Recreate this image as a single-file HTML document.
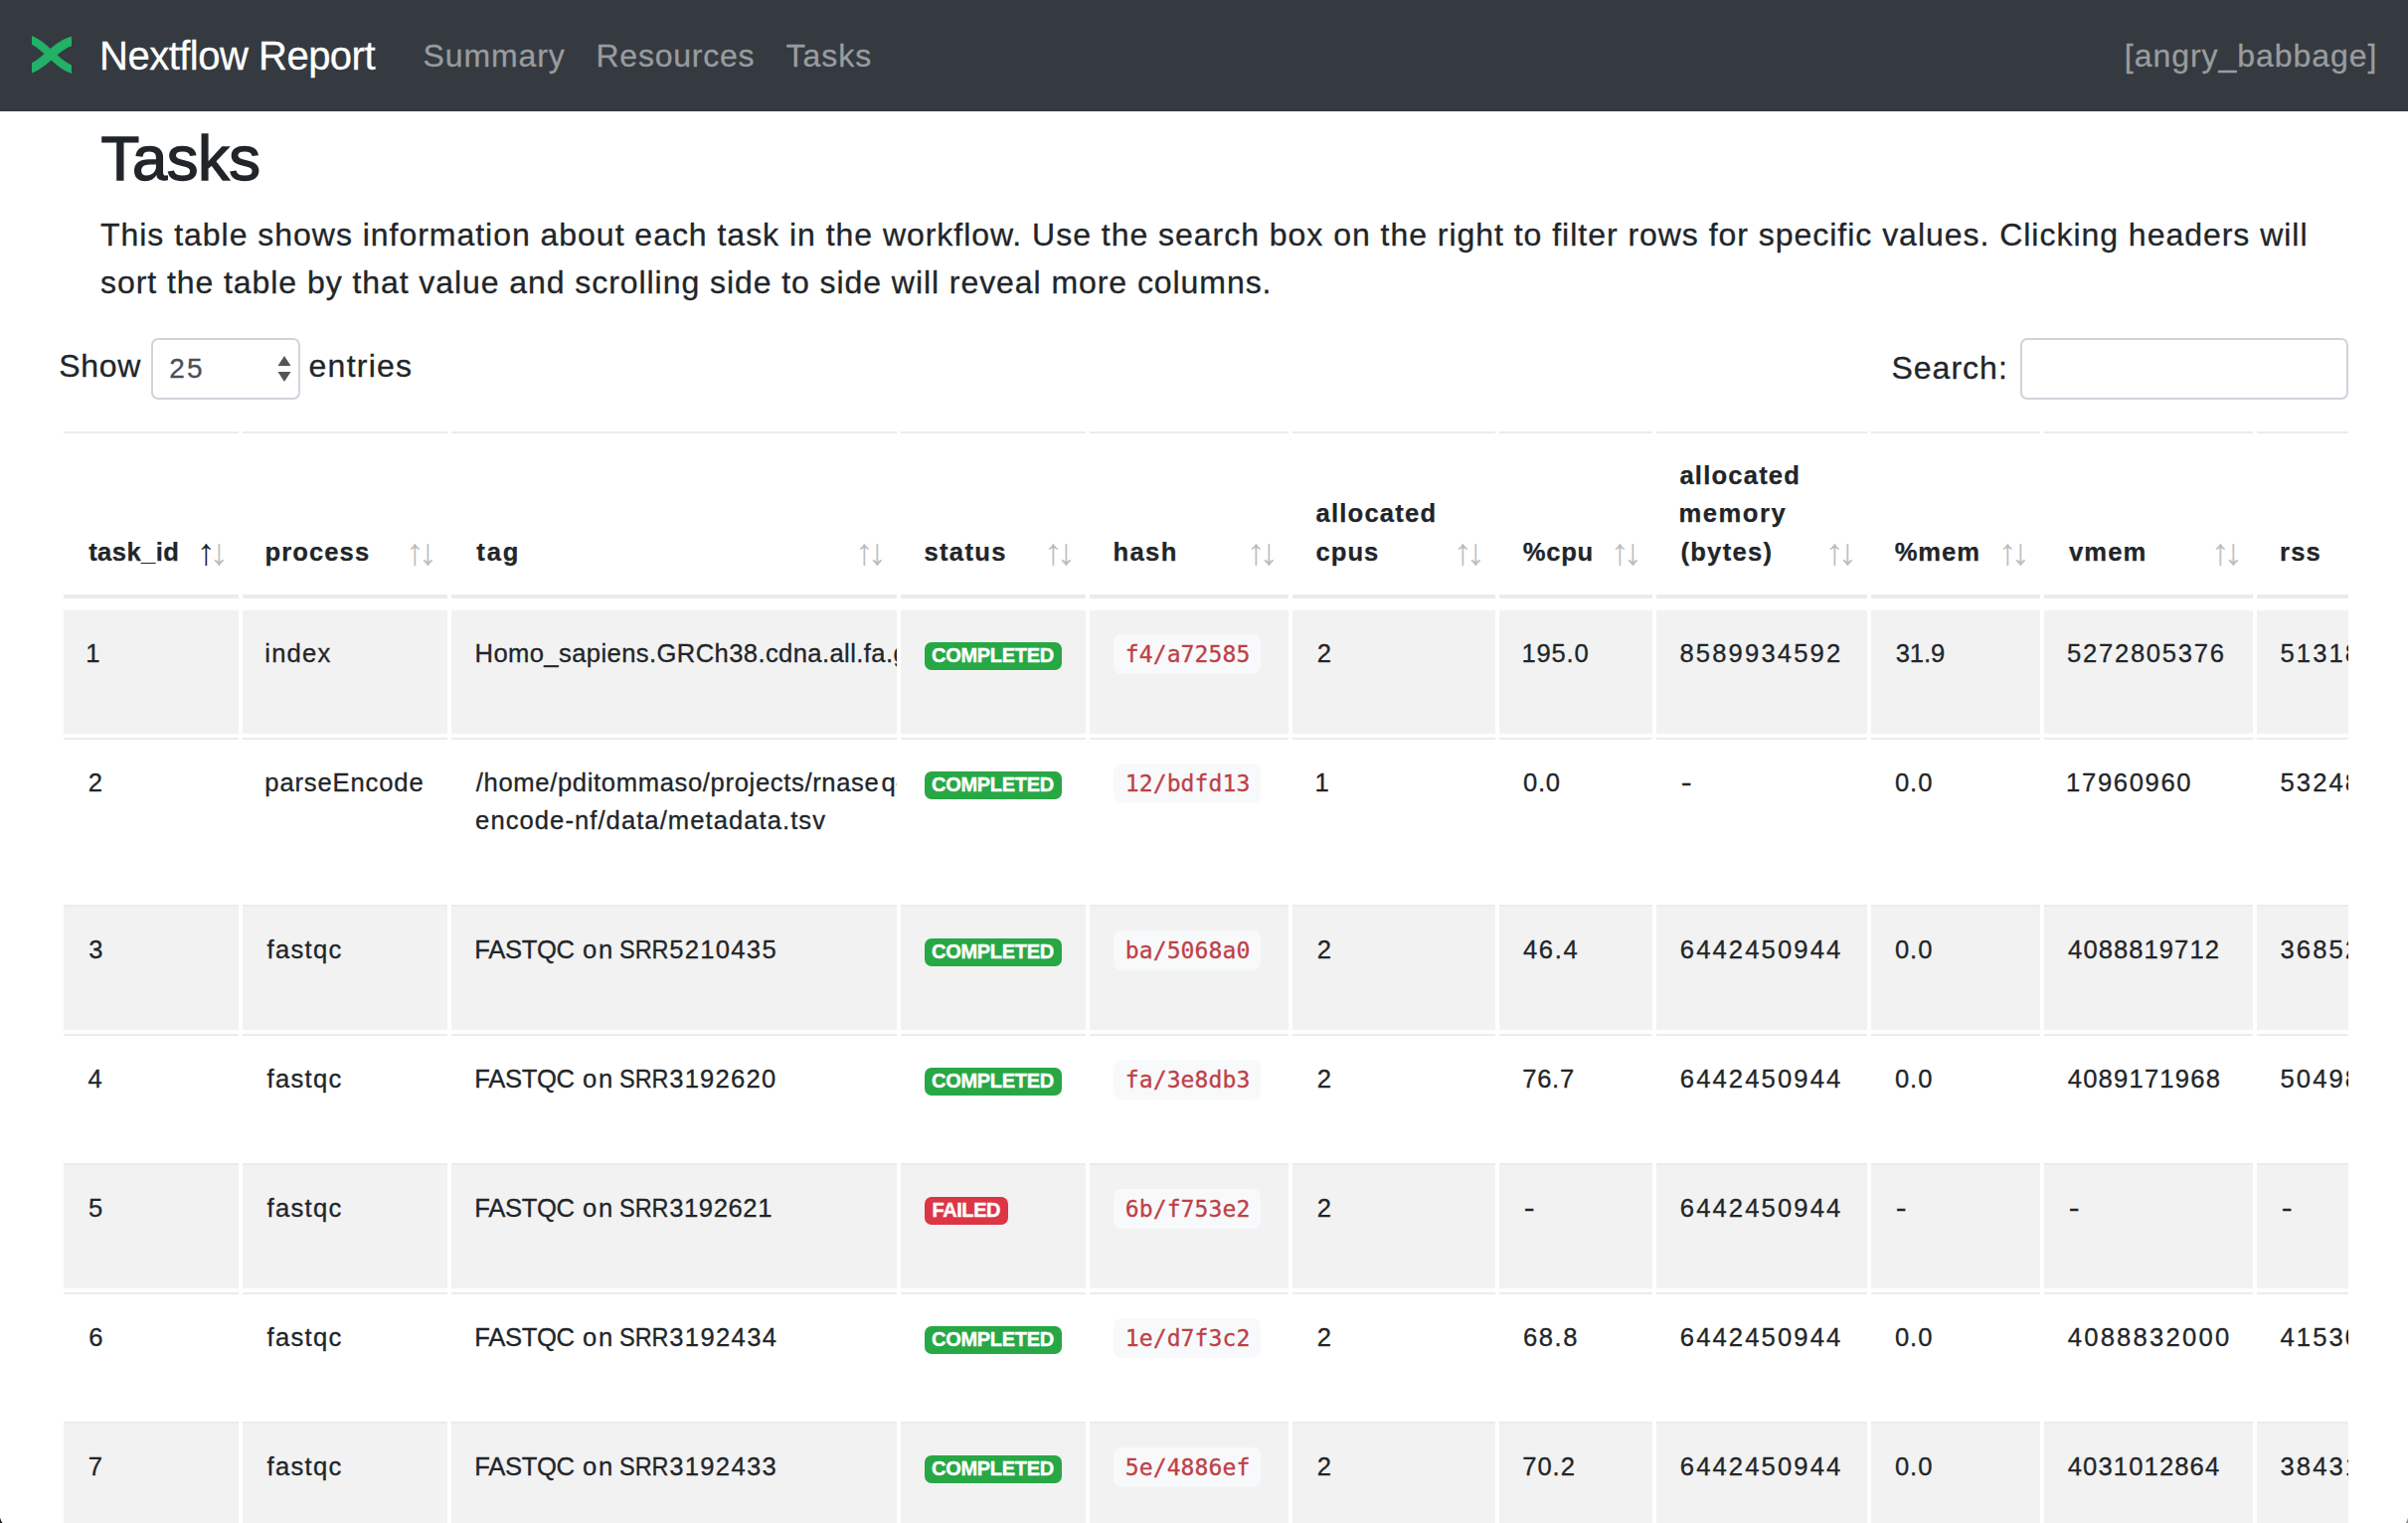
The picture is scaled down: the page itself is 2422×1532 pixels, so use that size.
<!DOCTYPE html>
<html lang="en">
<head>
<meta charset="utf-8">
<title>Nextflow Report</title>
<style>
html,body{margin:0;padding:0}
body{width:2422px;height:1532px;overflow:hidden;background:#fff;color:#212529;font-family:"Liberation Sans",sans-serif;font-size:32px;line-height:48px;position:relative;-webkit-text-stroke:0.3px currentColor}
.t{position:absolute;white-space:nowrap}
#nav{position:absolute;left:0;top:0;width:2422px;height:112px;background:#343a40}
#logo{position:absolute;left:32px;top:35px;width:40px;height:39px;overflow:hidden}
#brand{position:absolute;left:0;top:26px;font-size:40px;line-height:60px;color:#fff}
.nl{position:absolute;left:0;top:32px;font-size:32px;line-height:48px;color:#999c9f}
h2{position:absolute;left:0;top:110.7px;margin:0;font-size:63.5px;line-height:96px;font-weight:normal;-webkit-text-stroke:1.4px #212529}
#desc{position:absolute;left:0;top:212px;margin:0;font-size:32px;line-height:48px}
#desc .t+.t{top:48px}
#ctl{position:absolute;left:0;top:344px;line-height:48px}
#slab{position:absolute;left:0;top:346px;line-height:48px}
#sel{position:absolute;left:152px;top:340px;width:146px;height:58px;border:2px solid #ced4da;border-radius:7px;background:#fff;font-size:28px;line-height:42px;color:#495057}
#sel .t{top:8px}
#sel svg{position:absolute;left:125px;top:16px}
#sin{position:absolute;left:2032px;top:340px;width:326px;height:58px;box-sizing:content-box;margin:0;padding:0;border:2px solid #ced4da;border-radius:7px;background:#fff;outline:0;-webkit-appearance:none;appearance:none}
#tw{position:absolute;left:60px;top:430px;width:2302px;height:1102px;overflow:hidden;font-size:25.6px;line-height:38.4px}
.th{position:absolute;top:4px;height:162px;-webkit-text-stroke:0.25px currentColor;border-top:2px solid #e9ecef;border-bottom:4px solid #e9ecef;font-weight:bold}
.ar{position:absolute;top:101.2px;width:18.75px;font-size:37.5px;line-height:37.5px;font-weight:normal;color:#bcbdbe;-webkit-text-stroke:0;margin-left:-0.5px}
.th.asc .u{color:#212529}
.td{position:absolute;box-sizing:border-box;border-top:2px solid #e9ecef;overflow:hidden}
.td.first{border-top:0}
.td.odd{background:#f2f2f2}
.in{position:absolute;left:0;top:0;width:100%;height:100%}
.td .in{position:relative}
.ct{position:absolute;left:0;top:24px}
.badge{position:absolute;left:24px;top:32px;height:28px;font-size:20px;line-height:27px;-webkit-text-stroke:0.4px #fff;font-weight:bold;color:#fff;border-radius:7px}
.badge.ok{width:138px;background:#28a745}
.badge.fail{width:84px;background:#dc3545}
code{-webkit-text-stroke:0.3px #bd4147;position:absolute;left:24px;top:24px;width:148px;height:40px;font-family:"DejaVu Sans Mono","Liberation Mono",monospace;font-size:23px;line-height:40px;color:#bd4147;background:#f8f9fa;border-radius:8px}
.cnr{position:absolute;bottom:0;width:2.5px;height:5.5px}
#cl{left:0;background:#1c1e22;clip-path:polygon(0 0,0 100%,100% 100%,40% 55%)}
#cr{right:0;background:#8f9193;clip-path:polygon(100% 0,100% 100%,0 100%,60% 55%)}
</style>
</head>
<body>
<div id="nav">
<svg id="logo" viewBox="0 0 40 39"><g fill="none" stroke="#23b067"><path stroke-width="7.9" d="M-3 4.1 C14 9.3 23 29.5 43 36"/><path stroke-width="9.3" d="M-3 34.6 C14 29.5 23 10 43 5.6"/></g></svg>
<div id="brand"><span class="t" style="left:100.00px;letter-spacing:-0.500px">Nextflow Report</span></div>
<div class="nl"><span class="t" style="left:425.60px;letter-spacing:0.867px">Summary</span> <span class="t" style="left:599.50px;letter-spacing:0.763px">Resources</span> <span class="t" style="left:790.40px;letter-spacing:1.025px">Tasks</span> <span class="t" style="left:2136.80px;letter-spacing:0.957px">[angry_babbage]</span></div>
</div>
<h2><span class="t" style="left:101.60px;letter-spacing:-0.450px">Tasks</span></h2>
<p id="desc"><span class="t" style="left:101.00px;letter-spacing:0.971px">This table shows information about each task in the workflow. Use the search box on the right to filter rows for specific values. Clicking headers will</span> <span class="t" style="left:101.00px;letter-spacing:0.934px">sort the table by that value and scrolling side to side will reveal more columns.</span></p>
<div id="ctl"><span class="t" style="left:59.30px;letter-spacing:0.667px">Show</span> <span class="t" style="left:310.60px;letter-spacing:1.233px">entries</span></div>
<div id="sel"><span class="t" style="left:16.20px;letter-spacing:2.300px">25</span><svg width="14" height="28" viewBox="0 0 14 28"><path d="M7 0 L13.5 10 L0.5 10 Z M0.5 16 L13.5 16 L7 26 Z" fill="#555"/></svg></div>
<div id="slab"><span class="t" style="left:1902.40px;letter-spacing:1.017px">Search:</span></div>
<input id="sin" type="search" aria-label="Search">
<div class="cnr" id="cl"></div><div class="cnr" id="cr"></div>
<div id="tw">
<div class="th asc" style="left:4px;width:176px"><span class="t" style="left:25.20px;letter-spacing:0.400px;bottom:24.0px">task_id</span><span class="ar u" style="left:134.6px">&#8593;</span><span class="ar d" style="left:147.6px">&#8595;</span></div>
<div class="th" style="left:184px;width:206px"><span class="t" style="left:22.60px;letter-spacing:1.067px;bottom:24.0px">process</span><span class="ar u" style="left:164.6px">&#8593;</span><span class="ar d" style="left:177.6px">&#8595;</span></div>
<div class="th" style="left:394px;width:448px"><span class="t" style="left:25.30px;letter-spacing:1.900px;bottom:24.0px">tag</span><span class="ar u" style="left:406.6px">&#8593;</span><span class="ar d" style="left:419.6px">&#8595;</span></div>
<div class="th" style="left:846px;width:186px"><span class="t" style="left:23.40px;letter-spacing:1.360px;bottom:24.0px">status</span><span class="ar u" style="left:144.6px">&#8593;</span><span class="ar d" style="left:157.6px">&#8595;</span></div>
<div class="th" style="left:1036px;width:200px"><span class="t" style="left:23.50px;letter-spacing:1.367px;bottom:24.0px">hash</span><span class="ar u" style="left:158.6px">&#8593;</span><span class="ar d" style="left:171.6px">&#8595;</span></div>
<div class="th" style="left:1240px;width:204px"><span class="t" style="left:23.50px;letter-spacing:1.200px;bottom:62.4px">allocated</span> <span class="t" style="left:23.50px;letter-spacing:1.033px;bottom:24.0px">cpus</span><span class="ar u" style="left:162.6px">&#8593;</span><span class="ar d" style="left:175.6px">&#8595;</span></div>
<div class="th" style="left:1448px;width:154px"><span class="t" style="left:23.80px;letter-spacing:0.700px;bottom:24.0px">%cpu</span><span class="ar u" style="left:112.6px">&#8593;</span><span class="ar d" style="left:125.6px">&#8595;</span></div>
<div class="th" style="left:1606px;width:212px"><span class="t" style="left:23.40px;letter-spacing:1.200px;bottom:100.8px">allocated</span> <span class="t" style="left:22.40px;letter-spacing:1.540px;bottom:62.4px">memory</span> <span class="t" style="left:24.40px;letter-spacing:1.283px;bottom:24.0px">(bytes)</span><span class="ar u" style="left:170.6px">&#8593;</span><span class="ar d" style="left:183.6px">&#8595;</span></div>
<div class="th" style="left:1822px;width:170px"><span class="t" style="left:23.70px;letter-spacing:0.900px;bottom:24.0px">%mem</span><span class="ar u" style="left:128.6px">&#8593;</span><span class="ar d" style="left:141.6px">&#8595;</span></div>
<div class="th" style="left:1996px;width:210px"><span class="t" style="left:25.10px;letter-spacing:1.033px;bottom:24.0px">vmem</span><span class="ar u" style="left:168.6px">&#8593;</span><span class="ar d" style="left:181.6px">&#8595;</span></div>
<div class="th" style="left:2210px;width:210px"><span class="t" style="left:23.10px;letter-spacing:1.100px;bottom:24.0px">rss</span></div>
<div class="td odd first c0" style="left:4px;width:176px;top:184px;height:124px"><div class="in"><div class="ct"><span class="t" style="left:22.15px;letter-spacing:0.000px">1</span></div></div></div>
<div class="td odd first c1" style="left:184px;width:206px;top:184px;height:124px"><div class="in"><div class="ct"><span class="t" style="left:22.30px;letter-spacing:1.200px">index</span></div></div></div>
<div class="td odd first c2" style="left:394px;width:448px;top:184px;height:124px"><div class="in"><div class="ct"><span class="t" style="left:23.50px;letter-spacing:0.394px">Homo_sapiens.GRCh38.cdna.all.fa.gz</span></div></div></div>
<div class="td odd first c3" style="left:846px;width:186px;top:184px;height:124px"><div class="in"><span class="badge ok"><span class="t" style="left:7.00px;letter-spacing:-0.300px">COMPLETED</span></span></div></div>
<div class="td odd first c4" style="left:1036px;width:200px;top:184px;height:124px"><div class="in"><code><span class="t" style="left:11.70px;letter-spacing:0.137px">f4/a72585</span></code></div></div>
<div class="td odd first c5" style="left:1240px;width:204px;top:184px;height:124px"><div class="in"><div class="ct"><span class="t" style="left:24.85px;letter-spacing:0.000px">2</span></div></div></div>
<div class="td odd first c6" style="left:1448px;width:154px;top:184px;height:124px"><div class="in"><div class="ct"><span class="t" style="left:22.50px;letter-spacing:0.800px">195.0</span></div></div></div>
<div class="td odd first c7" style="left:1606px;width:212px;top:184px;height:124px"><div class="in"><div class="ct"><span class="t" style="left:23.40px;letter-spacing:2.167px">8589934592</span></div></div></div>
<div class="td odd first c8" style="left:1822px;width:170px;top:184px;height:124px"><div class="in"><div class="ct"><span class="t" style="left:24.70px;letter-spacing:-0.067px">31.9</span></div></div></div>
<div class="td odd first c9" style="left:1996px;width:210px;top:184px;height:124px"><div class="in"><div class="ct"><span class="t" style="left:23.10px;letter-spacing:1.722px">5272805376</span></div></div></div>
<div class="td odd first c10" style="left:2210px;width:210px;top:184px;height:124px"><div class="in"><div class="ct"><span class="t" style="left:23.5px;letter-spacing:2.1px">513187840</span></div></div></div>
<div class="td c0" style="left:4px;width:176px;top:312px;height:164px"><div class="in"><div class="ct"><span class="t" style="left:24.65px;letter-spacing:0.000px">2</span></div></div></div>
<div class="td c1" style="left:184px;width:206px;top:312px;height:164px"><div class="in"><div class="ct"><span class="t" style="left:22.30px;letter-spacing:0.850px">parseEncode</span></div></div></div>
<div class="td c2" style="left:394px;width:448px;top:312px;height:164px"><div class="in"><div class="ct"><span class="t" style="left:24.80px;letter-spacing:0.650px">/home/pditommaso/projects/rnase</span><span class="t" style="left:432.50px;letter-spacing:0.000px">q-</span><span class="t" style="left:24.10px;letter-spacing:1.058px;top:38.4px">encode-nf/data/metadata.tsv</span></div></div></div>
<div class="td c3" style="left:846px;width:186px;top:312px;height:164px"><div class="in"><span class="badge ok"><span class="t" style="left:7.00px;letter-spacing:-0.300px">COMPLETED</span></span></div></div>
<div class="td c4" style="left:1036px;width:200px;top:312px;height:164px"><div class="in"><code><span class="t" style="left:11.70px;letter-spacing:0.137px">12/bdfd13</span></code></div></div>
<div class="td c5" style="left:1240px;width:204px;top:312px;height:164px"><div class="in"><div class="ct"><span class="t" style="left:22.40px;letter-spacing:0.000px">1</span></div></div></div>
<div class="td c6" style="left:1448px;width:154px;top:312px;height:164px"><div class="in"><div class="ct"><span class="t" style="left:24.00px;letter-spacing:0.650px">0.0</span></div></div></div>
<div class="td c7" style="left:1606px;width:212px;top:312px;height:164px"><div class="in"><div class="ct"><span class="t" style="left:25.5px;letter-spacing:0;transform:scaleX(1.27)">-</span></div></div></div>
<div class="td c8" style="left:1822px;width:170px;top:312px;height:164px"><div class="in"><div class="ct"><span class="t" style="left:23.90px;letter-spacing:0.950px">0.0</span></div></div></div>
<div class="td c9" style="left:1996px;width:210px;top:312px;height:164px"><div class="in"><div class="ct"><span class="t" style="left:22.10px;letter-spacing:1.657px">17960960</span></div></div></div>
<div class="td c10" style="left:2210px;width:210px;top:312px;height:164px"><div class="in"><div class="ct"><span class="t" style="left:23.5px;letter-spacing:2.1px">5324800</span></div></div></div>
<div class="td odd c0" style="left:4px;width:176px;top:480px;height:126px"><div class="in"><div class="ct"><span class="t" style="left:25.20px;letter-spacing:0.000px">3</span></div></div></div>
<div class="td odd c1" style="left:184px;width:206px;top:480px;height:126px"><div class="in"><div class="ct"><span class="t" style="left:24.60px;letter-spacing:1.280px">fastqc</span></div></div></div>
<div class="td odd c2" style="left:394px;width:448px;top:480px;height:126px"><div class="in"><div class="ct"><span class="t" style="left:23.30px;letter-spacing:-0.340px">FASTQC</span> <span class="t" style="left:131.90px;letter-spacing:2.000px">on</span> <span class="t" style="left:169.48px;transform:scaleX(0.9173);transform-origin:0 50%">SRR</span><span class="t" style="left:219.20px;letter-spacing:1.300px">5210435</span></div></div></div>
<div class="td odd c3" style="left:846px;width:186px;top:480px;height:126px"><div class="in"><span class="badge ok"><span class="t" style="left:7.00px;letter-spacing:-0.300px">COMPLETED</span></span></div></div>
<div class="td odd c4" style="left:1036px;width:200px;top:480px;height:126px"><div class="in"><code><span class="t" style="left:11.70px;letter-spacing:0.137px">ba/5068a0</span></code></div></div>
<div class="td odd c5" style="left:1240px;width:204px;top:480px;height:126px"><div class="in"><div class="ct"><span class="t" style="left:24.85px;letter-spacing:0.000px">2</span></div></div></div>
<div class="td odd c6" style="left:1448px;width:154px;top:480px;height:126px"><div class="in"><div class="ct"><span class="t" style="left:23.90px;letter-spacing:1.700px">46.4</span></div></div></div>
<div class="td odd c7" style="left:1606px;width:212px;top:480px;height:126px"><div class="in"><div class="ct"><span class="t" style="left:23.80px;letter-spacing:2.122px">6442450944</span></div></div></div>
<div class="td odd c8" style="left:1822px;width:170px;top:480px;height:126px"><div class="in"><div class="ct"><span class="t" style="left:23.90px;letter-spacing:0.950px">0.0</span></div></div></div>
<div class="td odd c9" style="left:1996px;width:210px;top:480px;height:126px"><div class="in"><div class="ct"><span class="t" style="left:24.10px;letter-spacing:1.056px">4088819712</span></div></div></div>
<div class="td odd c10" style="left:2210px;width:210px;top:480px;height:126px"><div class="in"><div class="ct"><span class="t" style="left:23.5px;letter-spacing:2.1px">368529408</span></div></div></div>
<div class="td c0" style="left:4px;width:176px;top:610px;height:126px"><div class="in"><div class="ct"><span class="t" style="left:24.50px;letter-spacing:0.000px">4</span></div></div></div>
<div class="td c1" style="left:184px;width:206px;top:610px;height:126px"><div class="in"><div class="ct"><span class="t" style="left:24.60px;letter-spacing:1.280px">fastqc</span></div></div></div>
<div class="td c2" style="left:394px;width:448px;top:610px;height:126px"><div class="in"><div class="ct"><span class="t" style="left:23.30px;letter-spacing:-0.340px">FASTQC</span> <span class="t" style="left:131.90px;letter-spacing:2.000px">on</span> <span class="t" style="left:169.48px;transform:scaleX(0.9173);transform-origin:0 50%">SRR</span><span class="t" style="left:219.20px;letter-spacing:1.217px">3192620</span></div></div></div>
<div class="td c3" style="left:846px;width:186px;top:610px;height:126px"><div class="in"><span class="badge ok"><span class="t" style="left:7.00px;letter-spacing:-0.300px">COMPLETED</span></span></div></div>
<div class="td c4" style="left:1036px;width:200px;top:610px;height:126px"><div class="in"><code><span class="t" style="left:11.70px;letter-spacing:0.137px">fa/3e8db3</span></code></div></div>
<div class="td c5" style="left:1240px;width:204px;top:610px;height:126px"><div class="in"><div class="ct"><span class="t" style="left:24.85px;letter-spacing:0.000px">2</span></div></div></div>
<div class="td c6" style="left:1448px;width:154px;top:610px;height:126px"><div class="in"><div class="ct"><span class="t" style="left:23.20px;letter-spacing:0.733px">76.7</span></div></div></div>
<div class="td c7" style="left:1606px;width:212px;top:610px;height:126px"><div class="in"><div class="ct"><span class="t" style="left:23.80px;letter-spacing:2.122px">6442450944</span></div></div></div>
<div class="td c8" style="left:1822px;width:170px;top:610px;height:126px"><div class="in"><div class="ct"><span class="t" style="left:23.90px;letter-spacing:0.950px">0.0</span></div></div></div>
<div class="td c9" style="left:1996px;width:210px;top:610px;height:126px"><div class="in"><div class="ct"><span class="t" style="left:23.70px;letter-spacing:1.211px">4089171968</span></div></div></div>
<div class="td c10" style="left:2210px;width:210px;top:610px;height:126px"><div class="in"><div class="ct"><span class="t" style="left:23.5px;letter-spacing:2.1px">504987648</span></div></div></div>
<div class="td odd c0" style="left:4px;width:176px;top:740px;height:126px"><div class="in"><div class="ct"><span class="t" style="left:25.10px;letter-spacing:0.000px">5</span></div></div></div>
<div class="td odd c1" style="left:184px;width:206px;top:740px;height:126px"><div class="in"><div class="ct"><span class="t" style="left:24.60px;letter-spacing:1.280px">fastqc</span></div></div></div>
<div class="td odd c2" style="left:394px;width:448px;top:740px;height:126px"><div class="in"><div class="ct"><span class="t" style="left:23.30px;letter-spacing:-0.340px">FASTQC</span> <span class="t" style="left:131.90px;letter-spacing:2.000px">on</span> <span class="t" style="left:169.48px;transform:scaleX(0.9173);transform-origin:0 50%">SRR</span><span class="t" style="left:219.20px;letter-spacing:0.600px">3192621</span></div></div></div>
<div class="td odd c3" style="left:846px;width:186px;top:740px;height:126px"><div class="in"><span class="badge fail"><span class="t" style="left:7.50px;letter-spacing:-0.420px">FAILED</span></span></div></div>
<div class="td odd c4" style="left:1036px;width:200px;top:740px;height:126px"><div class="in"><code><span class="t" style="left:11.70px;letter-spacing:0.137px">6b/f753e2</span></code></div></div>
<div class="td odd c5" style="left:1240px;width:204px;top:740px;height:126px"><div class="in"><div class="ct"><span class="t" style="left:24.85px;letter-spacing:0.000px">2</span></div></div></div>
<div class="td odd c6" style="left:1448px;width:154px;top:740px;height:126px"><div class="in"><div class="ct"><span class="t" style="left:25.5px;letter-spacing:0;transform:scaleX(1.27)">-</span></div></div></div>
<div class="td odd c7" style="left:1606px;width:212px;top:740px;height:126px"><div class="in"><div class="ct"><span class="t" style="left:23.80px;letter-spacing:2.122px">6442450944</span></div></div></div>
<div class="td odd c8" style="left:1822px;width:170px;top:740px;height:126px"><div class="in"><div class="ct"><span class="t" style="left:25.5px;letter-spacing:0;transform:scaleX(1.27)">-</span></div></div></div>
<div class="td odd c9" style="left:1996px;width:210px;top:740px;height:126px"><div class="in"><div class="ct"><span class="t" style="left:25.5px;letter-spacing:0;transform:scaleX(1.27)">-</span></div></div></div>
<div class="td odd c10" style="left:2210px;width:210px;top:740px;height:126px"><div class="in"><div class="ct"><span class="t" style="left:25.5px;letter-spacing:0;transform:scaleX(1.27)">-</span></div></div></div>
<div class="td c0" style="left:4px;width:176px;top:870px;height:126px"><div class="in"><div class="ct"><span class="t" style="left:25.20px;letter-spacing:0.000px">6</span></div></div></div>
<div class="td c1" style="left:184px;width:206px;top:870px;height:126px"><div class="in"><div class="ct"><span class="t" style="left:24.60px;letter-spacing:1.280px">fastqc</span></div></div></div>
<div class="td c2" style="left:394px;width:448px;top:870px;height:126px"><div class="in"><div class="ct"><span class="t" style="left:23.30px;letter-spacing:-0.340px">FASTQC</span> <span class="t" style="left:131.90px;letter-spacing:2.000px">on</span> <span class="t" style="left:169.48px;transform:scaleX(0.9173);transform-origin:0 50%">SRR</span><span class="t" style="left:219.20px;letter-spacing:1.367px">3192434</span></div></div></div>
<div class="td c3" style="left:846px;width:186px;top:870px;height:126px"><div class="in"><span class="badge ok"><span class="t" style="left:7.00px;letter-spacing:-0.300px">COMPLETED</span></span></div></div>
<div class="td c4" style="left:1036px;width:200px;top:870px;height:126px"><div class="in"><code><span class="t" style="left:11.70px;letter-spacing:0.137px">1e/d7f3c2</span></code></div></div>
<div class="td c5" style="left:1240px;width:204px;top:870px;height:126px"><div class="in"><div class="ct"><span class="t" style="left:24.85px;letter-spacing:0.000px">2</span></div></div></div>
<div class="td c6" style="left:1448px;width:154px;top:870px;height:126px"><div class="in"><div class="ct"><span class="t" style="left:23.90px;letter-spacing:1.600px">68.8</span></div></div></div>
<div class="td c7" style="left:1606px;width:212px;top:870px;height:126px"><div class="in"><div class="ct"><span class="t" style="left:23.80px;letter-spacing:2.122px">6442450944</span></div></div></div>
<div class="td c8" style="left:1822px;width:170px;top:870px;height:126px"><div class="in"><div class="ct"><span class="t" style="left:23.90px;letter-spacing:0.950px">0.0</span></div></div></div>
<div class="td c9" style="left:1996px;width:210px;top:870px;height:126px"><div class="in"><div class="ct"><span class="t" style="left:23.70px;letter-spacing:2.244px">4088832000</span></div></div></div>
<div class="td c10" style="left:2210px;width:210px;top:870px;height:126px"><div class="in"><div class="ct"><span class="t" style="left:23.5px;letter-spacing:2.1px">415301632</span></div></div></div>
<div class="td odd c0" style="left:4px;width:176px;top:1000px;height:126px"><div class="in"><div class="ct"><span class="t" style="left:24.70px;letter-spacing:0.000px">7</span></div></div></div>
<div class="td odd c1" style="left:184px;width:206px;top:1000px;height:126px"><div class="in"><div class="ct"><span class="t" style="left:24.60px;letter-spacing:1.280px">fastqc</span></div></div></div>
<div class="td odd c2" style="left:394px;width:448px;top:1000px;height:126px"><div class="in"><div class="ct"><span class="t" style="left:23.30px;letter-spacing:-0.340px">FASTQC</span> <span class="t" style="left:131.90px;letter-spacing:2.000px">on</span> <span class="t" style="left:169.48px;transform:scaleX(0.9173);transform-origin:0 50%">SRR</span><span class="t" style="left:219.20px;letter-spacing:1.317px">3192433</span></div></div></div>
<div class="td odd c3" style="left:846px;width:186px;top:1000px;height:126px"><div class="in"><span class="badge ok"><span class="t" style="left:7.00px;letter-spacing:-0.300px">COMPLETED</span></span></div></div>
<div class="td odd c4" style="left:1036px;width:200px;top:1000px;height:126px"><div class="in"><code><span class="t" style="left:11.70px;letter-spacing:0.137px">5e/4886ef</span></code></div></div>
<div class="td odd c5" style="left:1240px;width:204px;top:1000px;height:126px"><div class="in"><div class="ct"><span class="t" style="left:24.85px;letter-spacing:0.000px">2</span></div></div></div>
<div class="td odd c6" style="left:1448px;width:154px;top:1000px;height:126px"><div class="in"><div class="ct"><span class="t" style="left:23.20px;letter-spacing:0.967px">70.2</span></div></div></div>
<div class="td odd c7" style="left:1606px;width:212px;top:1000px;height:126px"><div class="in"><div class="ct"><span class="t" style="left:23.80px;letter-spacing:2.122px">6442450944</span></div></div></div>
<div class="td odd c8" style="left:1822px;width:170px;top:1000px;height:126px"><div class="in"><div class="ct"><span class="t" style="left:23.90px;letter-spacing:0.950px">0.0</span></div></div></div>
<div class="td odd c9" style="left:1996px;width:210px;top:1000px;height:126px"><div class="in"><div class="ct"><span class="t" style="left:23.70px;letter-spacing:1.133px">4031012864</span></div></div></div>
<div class="td odd c10" style="left:2210px;width:210px;top:1000px;height:126px"><div class="in"><div class="ct"><span class="t" style="left:23.5px;letter-spacing:2.1px">384311296</span></div></div></div>
</div>
</body>
</html>
